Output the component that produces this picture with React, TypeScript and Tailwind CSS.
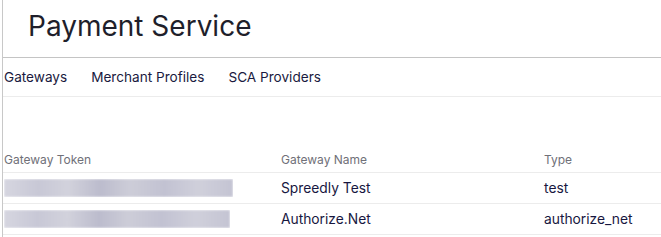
const tabs = ["Gateways", "Merchant Profiles", "SCA Providers"];

const gateways = [
  { name: "Spreedly Test", type: "test", blurWidth: "w-[229px]" },
  { name: "Authorize.Net", type: "authorize_net", blurWidth: "w-[226px]" },
];

function BlurredToken({ width }: { width: string }) {
  return (
    <div className={`h-[18px] ${width} overflow-hidden`}>
      <div className="h-full w-full bg-[linear-gradient(90deg,#d6d6e0_0%,#c8c8d6_15%,#d2d2dc_28%,#bcbccd_42%,#cdcdd8_55%,#c2c2d2_70%,#d0d0db_85%,#c4c4d3_100%)] blur-[1px]" />
    </div>
  );
}

export default function App() {
  return (
    <div className="ml-[2px] min-h-[237px] border-l border-[#c8c8c8] bg-white font-['Inter',sans-serif]">
      <header className="flex h-[58px] items-center border-b border-[#c4c4c4] pb-[6px] pl-[25px]">
        <h1 className="text-[28px] leading-none text-[#1f1f2b]">Payment Service</h1>
      </header>

      <nav className="flex h-[39px] items-center gap-6 border-b border-[#ececec] pl-[1px]">
        {tabs.map((tab) => (
          <span key={tab} className="text-[13.6px] text-[#1a1a40]">
            {tab}
          </span>
        ))}
      </nav>

      <div className="pt-[50px]">
        <div className="grid h-[26px] grid-cols-[277px_263px_1fr] items-center border-b border-[#ececec] pl-[1px] text-xs text-[#707078]">
          <span>Gateway Token</span>
          <span>Gateway Name</span>
          <span>Type</span>
        </div>
        {gateways.map((g) => (
          <div
            key={g.name}
            className="grid h-[31px] grid-cols-[277px_263px_1fr] items-center border-b border-[#ececec] pl-[1px] text-[13.8px] text-[#17173f]"
          >
            <BlurredToken width={g.blurWidth} />
            <span>{g.name}</span>
            <span>{g.type}</span>
          </div>
        ))}
      </div>
    </div>
  );
}
